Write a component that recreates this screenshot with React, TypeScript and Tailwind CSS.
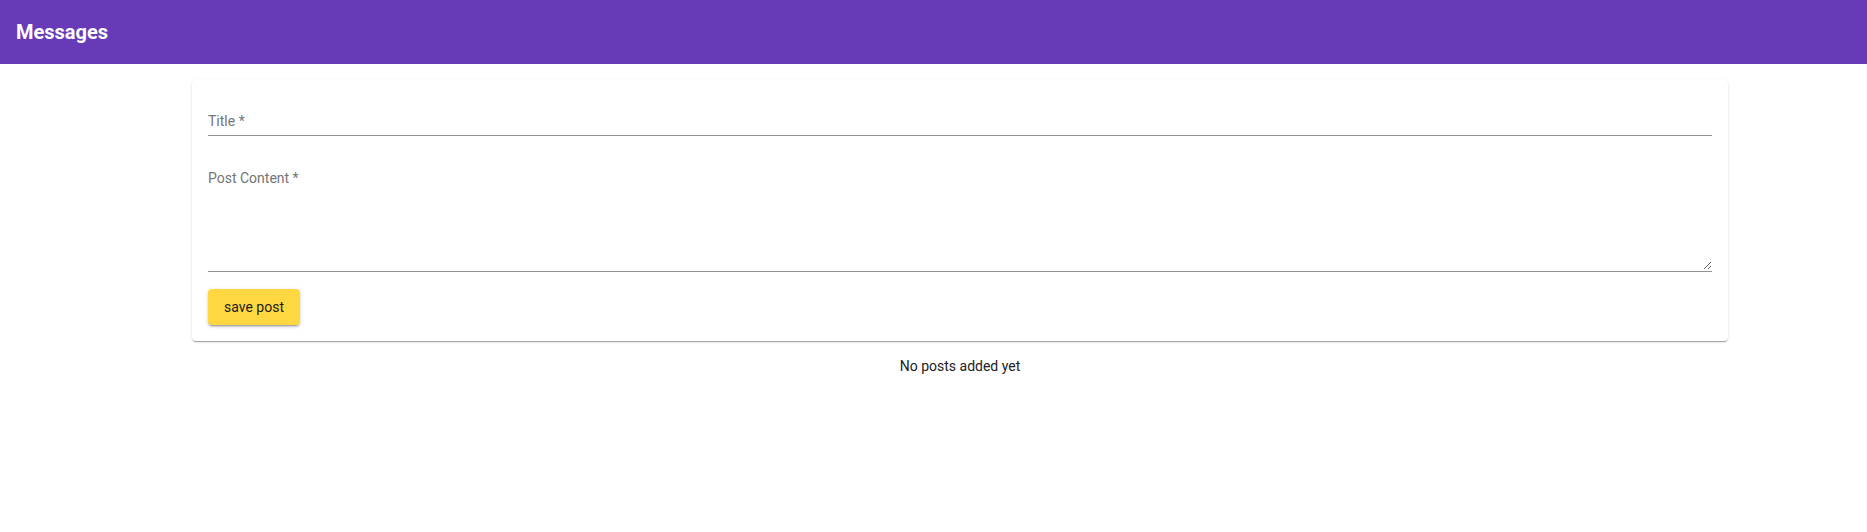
import { useState } from 'react'

const font = { fontFamily: 'Roboto, "Noto Sans", sans-serif' }

function PostForm() {
  const [title, setTitle] = useState('')
  const [content, setContent] = useState('')

  return (
    <div className="w-4/5 mx-auto mt-4 bg-white rounded p-4 shadow-[0_2px_1px_-1px_rgba(0,0,0,0.2),0_1px_1px_0_rgba(0,0,0,0.14),0_1px_3px_0_rgba(0,0,0,0.12)]">
      <div className="pt-4 pb-[5px] border-b border-[#949494]">
        <input
          value={title}
          onChange={(e) => setTitle(e.target.value)}
          placeholder="Title *"
          className="block w-full h-[18px] text-[14px] leading-[18px] outline-none bg-transparent text-[#212121] placeholder:text-[#757575]"
          style={font}
        />
      </div>

      <div className="mt-[33px] pb-px border-b border-[#949494]">
        <textarea
          value={content}
          onChange={(e) => setContent(e.target.value)}
          placeholder="Post Content *"
          className="block w-full h-[101px] p-0 text-[14px] leading-[18px] outline-none bg-transparent text-[#212121] placeholder:text-[#757575]"
          style={font}
        />
      </div>

      <button
        className="mt-[17px] h-9 px-4 rounded bg-[#ffd740] text-[14px] font-normal text-[#212121] shadow-[0_3px_1px_-2px_rgba(0,0,0,0.2),0_2px_2px_0_rgba(0,0,0,0.14),0_1px_5px_0_rgba(0,0,0,0.12)]"
        style={font}
      >
        save post
      </button>
    </div>
  )
}

export default function App() {
  return (
    <div className="w-full min-h-[532px] overflow-hidden bg-white" style={font}>
      <div className="w-[1920px]">
        <header className="h-16 px-4 flex items-center bg-[#673ab7] text-white">
          <span className="text-[20px] font-bold">Messages</span>
        </header>

        <PostForm />

        <p className="mt-[15px] text-center text-[14px] leading-5 text-[#212121]">No posts added yet</p>
      </div>
    </div>
  )
}
